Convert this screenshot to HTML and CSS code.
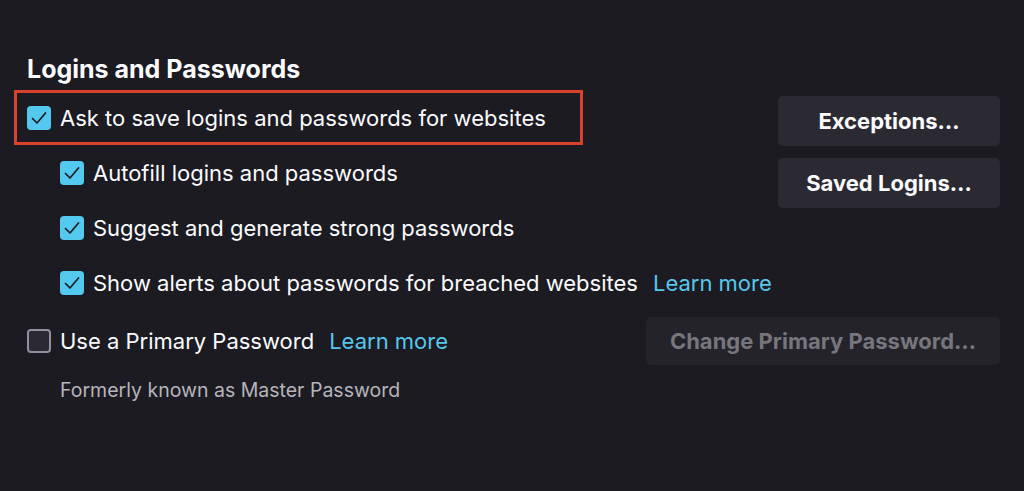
FILE: index.html
```html
<!DOCTYPE html>
<html>
<head>
<meta charset="utf-8">
<link rel="stylesheet" href="styles.css">
</head>
<body>
<div class="page">
  <h2 class="title">Logins and Passwords</h2>
  <div class="grid">
    <div class="options">
      <div class="row highlight">
        <span class="cb checked"><svg viewBox="0 0 24 24"><polyline points="5.5,12.5 10,17 18.5,7" /></svg></span>
        <span class="label">Ask to save logins and passwords for websites</span>
      </div>
      <div class="row sub">
        <span class="cb checked"><svg viewBox="0 0 24 24"><polyline points="5.5,12.5 10,17 18.5,7" /></svg></span>
        <span class="label">Autofill logins and passwords</span>
      </div>
      <div class="row sub">
        <span class="cb checked"><svg viewBox="0 0 24 24"><polyline points="5.5,12.5 10,17 18.5,7" /></svg></span>
        <span class="label">Suggest and generate strong passwords</span>
      </div>
      <div class="row sub">
        <span class="cb checked"><svg viewBox="0 0 24 24"><polyline points="5.5,12.5 10,17 18.5,7" /></svg></span>
        <span class="label">Show alerts about passwords for breached websites</span>
        <a class="link">Learn more</a>
      </div>
    </div>
    <div class="buttons">
      <button class="btn">Exceptions…</button>
      <button class="btn">Saved Logins…</button>
    </div>
  </div>
  <div class="primary-row">
    <div class="row-inline">
      <span class="cb"></span>
      <span class="label">Use a Primary Password</span>
      <a class="link">Learn more</a>
    </div>
    <button class="btn disabled">Change Primary Password…</button>
  </div>
  <div class="note">Formerly known as Master Password</div>
</div>
</body>
</html>
```

FILE: styles.css
```css
html, body {
  margin: 0;
  padding: 0;
  background: #1c1b22;
  color: #fbfbfe;
  font-family: Inter, "Noto Sans", sans-serif;
}
.page {
  padding: 53px 24px 0 27px;
}
.title {
  margin: 0 0 4px 0;
  font-size: 25px;
  font-weight: 700;
  line-height: 33px;
}
.grid {
  display: grid;
  grid-template-columns: 1fr 222px;
}
.options {
  display: flex;
  flex-direction: column;
}
.row {
  display: flex;
  align-items: center;
  height: 55px;
  box-sizing: border-box;
}
.row.highlight {
  margin-left: -13px;
  width: 569px;
  padding-left: 10px;
  border: 3px solid #d9432c;
}
.row.sub {
  padding-left: 33px;
}
.cb {
  width: 24px;
  height: 24px;
  box-sizing: border-box;
  border-radius: 4px;
  border: 2px solid #8f8f9d;
  background: #2b2a33;
  flex: none;
  margin-right: 9px;
  display: flex;
}
.cb.checked {
  background: #54c9ef;
  border: none;
}
.cb svg {
  width: 24px;
  height: 24px;
}
.cb polyline {
  fill: none;
  stroke: #1c1b22;
  stroke-width: 1.7;
  stroke-linecap: round;
  stroke-linejoin: round;
}
.label {
  font-size: 22px;
  white-space: nowrap;
}
.link {
  color: #57c7ec;
  font-size: 22px;
  margin-left: 15px;
  white-space: nowrap;
}
.buttons {
  display: flex;
  flex-direction: column;
  gap: 12px;
  padding-top: 6px;
}
.btn {
  height: 50px;
  border: none;
  border-radius: 5px;
  background: #2b2a33;
  color: #fbfbfe;
  font-family: Inter, "Noto Sans", sans-serif;
  font-size: 22px;
  font-weight: 700;
  padding: 0;
}
.primary-row {
  display: flex;
  align-items: center;
  justify-content: space-between;
  height: 58px;
  margin-top: 2px;
}
.row-inline {
  display: flex;
  align-items: center;
}
.btn.disabled {
  width: 354px;
  height: 48px;
  background: #24232a;
  color: #77767d;
}
.note {
  padding-left: 33px;
  margin-top: 8px;
  font-size: 19.5px;
  line-height: 24px;
  color: #b6b5bb;
}
```
